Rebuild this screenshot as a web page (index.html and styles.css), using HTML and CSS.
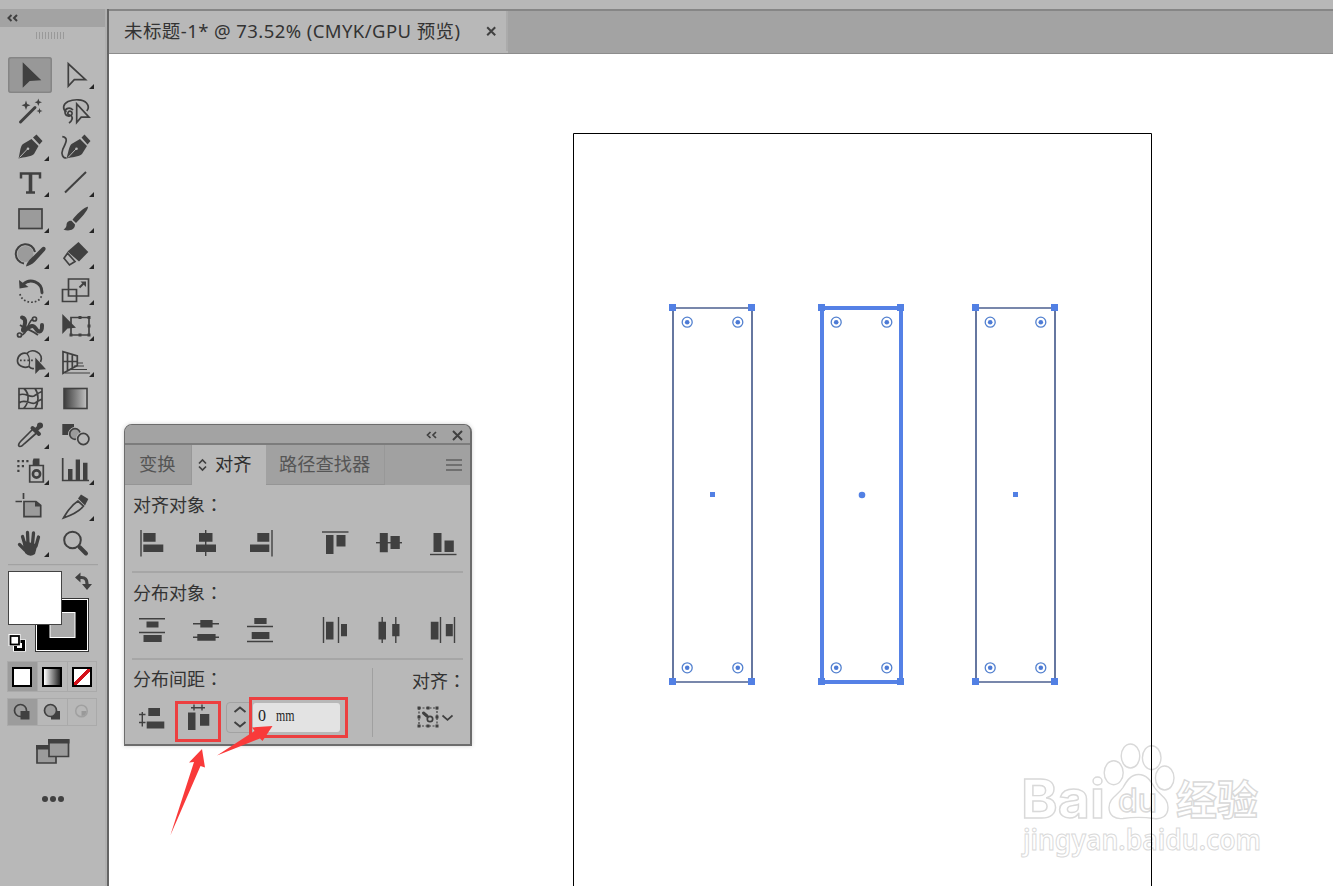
FILE: index.html
```html
<!DOCTYPE html>
<html lang="zh-CN">
<head>
<meta charset="utf-8">
<title>未标题-1*</title>
<link rel="stylesheet" href="styles.css">
</head>
<body>
<div class="app">
  <div class="topbar"></div>
  <aside class="toolbar">
    <div class="toolbar-head"><svg width="12" height="8" viewBox="0 0 12 8"><path class="ln2" d="M4.500 1 1.500 4l3 3M10 1 7 4l3 3"/></svg></div>
    <div class="grip"></div>
    <div class="tools">
      <div class="tool selected"><svg viewBox="-22 -18 44 36"><path class="f" d="M-7.300-12.700V12.700L-.300 6l11.600-.700z"/></svg></div>
      <div class="tool fly"><svg viewBox="-22 -18 44 36"><path class="ln" d="M-6.700-11.200V11L-.700 4.700H10.500z"/></svg></div>

      <div class="tool"><svg viewBox="-22 -18 44 36"><path class="ln3" d="M-9.500 11 5-3.500"/><path class="f" d="M-4-10.500-2.800-7 .5-5.700-2.800-4.500-4-1-5.200-4.500-8.500-5.700-5.200-7zM8.300-12.500l1 2.800 2.700 1-2.700 1-1 2.700-1-2.700-2.700-1 2.700-1zM9.500-3l.8 2.200 2.200.8-2.200.8L9.500 3 8.700.8 6.500 0l2.200-.8z"/></svg></div>
      <div class="tool"><svg viewBox="-22 -18 44 36"><path class="ln" d="M-8.500 1C-13-2-12-7-7-9.500-1-12 8-12 11.500-8c2.500 3 2 6 .3 8"/><path class="ln" d="M-2-1c-3-3-8-2-8 2 0 4.500 6 5.500 7 2 .5-3-3-4-4-1.500S-5 4-3.500 5c1.500 2 .5 5-2.500 7"/><path class="ln" d="M1.700-7V11.500L6.200 6.200H14z"/></svg></div>

      <div class="tool fly"><svg viewBox="-22 -18 44 36"><path class="f" d="M-11.500 11.500C-10 7-10-1-7-3L1.500-8 8.500-1 4 7C1 10-6 10-11.500 11.500zM3-9.500 6.500-12.500 12.500-6 9.500-2.500z"/><path class="cut" d="M-10.500 10.500-2.500 2"/><circle class="cutfill" cx="-2" cy="1.700" r="1.300"/></svg></div>
      <div class="tool"><svg viewBox="-22 -18 44 36"><path class="f" d="M-8.500 11.500C-7 7-6-1-3.500-3L5-8l7 7-5 8C4 10-3 10-8.500 11.500zM6.500-9.500 9.500-12.500 15.500-6 12.500-2.500z"/><path class="cut" d="M-7 10.500 1 2"/><circle class="cutfill" cx="1.500" cy="1.700" r="1.300"/><path class="ln" d="M-12.700-10.300c7 1 3 7 .5 12.500-2 5 0 9 3.700 8.800"/></svg></div>

      <div class="tool fly"><svg viewBox="-22 -18 44 36"><path class="ln3b" d="M.500-9.500V9"/><path class="ln2b" d="M-9-4.500V-9.500H10V-4.500M-4 9.500H5"/></svg></div>
      <div class="tool fly"><svg viewBox="-22 -18 44 36"><path class="ln2" d="M-10 9.500 11-11"/></svg></div>

      <div class="tool fly"><svg viewBox="-22 -18 44 36"><rect class="box" x="-11" y="-10" width="23" height="19.500"/></svg></div>
      <div class="tool fly"><svg viewBox="-22 -18 44 36"><path class="f" d="M13-12.300c-3-.6-12.500 8.500-15.500 13L1 4C5 0 13.500-9 13-12.300zM-3.500 1.800c-4-.3-5 2.700-5 4.500S-10 10-11.500 10.500C-7 12.500 0 11.500 0 5.500z"/></svg></div>

      <div class="tool fly"><svg viewBox="-22 -18 44 36"><circle class="soft" cx="-4.500" cy="-1" r="8"/><path class="ln2" d="M-6 8.500A9.700 9.700 0 1 1 5-3"/><path class="f" d="M-4 11.500C-3.500 8 0 4 3 1.500L12-7.500c2-2 5 .5 3 3L5 6.500C2 9.500-1 10.500-4 11.500z"/></svg></div>
      <div class="tool fly"><svg viewBox="-22 -18 44 36"><path class="f" d="M-7.500-3.500 3.500-13 13.300-3 4 6.500z"/><path class="ln" d="M-7.500-1.800-11 3.300-5.500 10 0 6.500z"/></svg></div>

      <div class="tool fly"><svg viewBox="-22 -18 44 36"><path class="ln3" d="M-7-6.500C0-13.500 12-9 12 1.500"/><path class="f" d="M-11-11-10.500-2.500-1.500-4z"/><path class="dot" d="M-10 3C-8 13 10 15 12 3"/></svg></div>
      <div class="tool fly"><svg viewBox="-22 -18 44 36"><path class="ln" d="M-6.500-12H13.500V5H-6.500zM-12.500-1.500H1.500V10.500h-14z"/><path class="ln2" d="M4.500-3.500 9-8"/><path class="f" d="M5.500-9.500H11V-4z"/></svg></div>

      <div class="tool fly"><svg viewBox="-22 -18 44 36"><path class="ln4" d="M-8-9.500c5 1 3 8 1 12-.5 4 5-3 9-3.500 4-.5 4 6 7.500 5.500C12.500 4 12 1 12-2"/><path class="ln" d="M-10 8C-2 9-3-7 4-8.500M-10-2C-5 2 2 3 8 8"/><circle class="hole" cx="-10.500" cy="8" r="2"/><circle class="hole" cx="4.500" cy="-8" r="2"/></svg></div>
      <div class="tool fly"><svg viewBox="-22 -18 44 36"><path class="ln" d="M-4-9.500H14V8H-4z"/><path class="f" d="M-12.700-13V7L-7.500 1.500 1 .700zM-5.500 6.500h3v3h-3zM3.500 6.500h3v3h-3zM12.500 6.500h3v3h-3zM12.500-11h3v3h-3zM3.500-11h3v3h-3zM12.500-2.500h3v3h-3z"/></svg></div>

      <div class="tool fly"><svg viewBox="-22 -18 44 36"><path class="ln" d="M4 5.500C1 6 0 5-1 3.500-7 6-13 2-12.500-3-12-8-7-11-3-9.500-1-12 3-13 7-11c4 2 5.500 6 3.500 10"/><path class="dot" d="M-10-2.700H3"/><path class="thin" d="M-3-9.500C0-6 0 0-1 3"/><path class="f" d="M5.300-5.500V11L9.500 6.700 16 6.300z"/></svg></div>
      <div class="tool fly"><svg viewBox="-22 -18 44 36"><path class="ln" d="M-12-11.300V10.300L2.300 2.500V-7zM-7.500-10V7.500M-2.700-8.500V5M-12-1.500H2.300"/><path class="thin" d="M2 0H8M-1 3H9M-5 6.500H12M-10 10H15"/></svg></div>

      <div class="tool"><svg viewBox="-22 -18 44 36"><path class="ln" d="M-11-10.500H12V9.500H-11zM-6-10.500C0-5-1 4-6.500 9.500M5-10.500C9-5 9 3 5 9.500M-11-4C-5-7 0-1 4-3 7-5 10-7 12-7.500M-11 4C-5-1 0 6 5 4 8 2 10 1 12 0"/></svg></div>
      <div class="tool"><svg viewBox="-22 -18 44 36"><defs><linearGradient id="g1"><stop offset="0" stop-color="#3c3c3c"/><stop offset="1" stop-color="#c2c2c2"/></linearGradient></defs><rect class="edge" x="-11" y="-10.500" width="23" height="20" fill="url(#g1)"/></svg></div>

      <div class="tool fly"><svg viewBox="-22 -18 44 36"><path class="ln" d="M2.500-5.500-9 6c-3 3-3 5.500-1 5.500s3-1.500 4.500-3L6.500-2"/><path class="ln4" d="M2.500-7 9-1M6-5l4.500-4.500"/><circle class="f" cx="10" cy="-9.500" r="3"/></svg></div>
      <div class="tool"><svg viewBox="-22 -18 44 36"><path class="f" d="M-12.700-11H-1V0H-12.700z"/><circle class="halo" cx="0" cy="-1" r="6.500"/><circle class="box" cx="0" cy="-1" r="5.300"/><circle class="halo" cx="8.300" cy="4" r="7"/><circle class="hole" cx="8.300" cy="4" r="5.600"/></svg></div>

      <div class="tool fly"><svg viewBox="-22 -18 44 36"><path class="f" d="M3.500-12.500H9.500V-6H2.700V-10zM-12.700-11h2.200v2.200h-2.200zM-8.200-11h2.200v2.200h-2.200zM-3.700-11h2.200v2.200h-2.200zM-12.700-6h2.200v2.200h-2.200zM-8.200-6h2.200v2.200h-2.200zM-12.700-1.300h2.200v2.200h-2.200z"/><path class="ln" d="M-.300-5.500H13.300V11H-.300z"/><circle class="ring" cx="6.500" cy="3" r="3.600"/></svg></div>
      <div class="tool fly"><svg viewBox="-22 -18 44 36"><path class="ln" d="M-12.300-13V9.500H14"/><path class="f" d="M-7-2h4.500V9H-7zM.700-11.500H5V9H.700zM8-8.200h4.500V9H8z"/></svg></div>

      <div class="tool"><svg viewBox="-22 -18 44 36"><path class="box" d="M-6-5.500H6L10.700-1.500V9.700H-6z"/><path class="f" d="M5-6V-.500H11z"/><path class="ln" d="M-14.500-5.500H-8M-6.500-14V-8"/></svg></div>
      <div class="tool fly"><svg viewBox="-22 -18 44 36"><path class="ln" d="M-11.500 11C-8 5-5-1 3-6L8.500-1C4 5-3 8-11.500 11z"/><path class="f" d="M3-8.500 6-12.500 13.300-8 10-1.500z"/></svg></div>

      <div class="tool fly"><svg viewBox="-22 -18 44 36"><path class="finger" d="M-5 2-7.500-6.500M-2 1-2.500-10.500M2.500 1 3.500-10M6 3 8.500-6M-5 7-10.500 1.500"/><path class="f" d="M-7 0-5 10Q0 15 5 11L7.500 1.500-6-2z"/></svg></div>
      <div class="tool"><svg viewBox="-22 -18 44 36"><circle class="ln2" cx="-2.500" cy="-3" r="8.300"/><path class="ln4" d="M4.500 4 11 10.500"/></svg></div>
    </div>
    <svg class="swatches" viewBox="8 564 90 91">
      <path class="rule" d="M8 564.500H98"/>
      <rect x="35.500" y="598.500" width="53" height="53" fill="#000" stroke="#333"/>
      <rect x="36.500" y="599.500" width="51" height="51" fill="#000" stroke="#fff"/>
      <rect x="50" y="612.500" width="25" height="25" fill="#aaa" stroke="#fff"/>
      <rect x="8.500" y="571.500" width="53" height="53" fill="#fff" stroke="#444"/>
      <path d="M79 577.500h2.500q5.500 0 5.500 6v1" fill="none" stroke="#444" stroke-width="3.200"/>
      <path class="f" d="M75 577.500 80.500 572.500V582.500zM82 584H92L87 590z"/>
      <rect x="15" y="641.500" width="9" height="8" fill="none" stroke="#fff" stroke-width="4"/>
      <rect x="15.500" y="641.500" width="8" height="8" fill="#fff" stroke="#000" stroke-width="3"/>
      <rect x="8.500" y="634" width="12" height="12" fill="#fff"/>
      <rect x="10.500" y="636" width="8.500" height="8.500" fill="#fff" stroke="#000" stroke-width="1.800"/>
    </svg>
    <div class="modes">
      <div class="on"><span class="chip"></span></div><div><span class="chip grad"></span></div><div><span class="chip none"></span></div>
    </div>
    <div class="modes draw">
      <div class="on"><svg viewBox="0 0 18 18"><circle class="ln" cx="7.500" cy="7.500" r="6"/><path class="f" d="M7.500 8h9v8.500h-9z"/></svg></div>
      <div><svg viewBox="0 0 18 18"><path class="f" d="M8 8h9v8.500H8z"/><circle class="box" cx="7.500" cy="7.500" r="6"/></svg></div>
      <div><svg viewBox="0 0 18 18"><circle cx="8.500" cy="8" r="5.800" fill="none" stroke="#a0a0a0" stroke-width="1.500"/><path d="M8.500 8h5a5 5 0 0 1-5 5z" fill="#999"/></svg></div>
    </div>
    <svg class="screens" width="34" height="26" viewBox="0 0 34 26"><path class="box" d="M1 7.500H20V24H1z"/><path class="f" d="M0 6H20v4.500H0z"/><path class="box" d="M13 1H32.500V17.500H13z"/><path class="f" d="M12 0H33.500V4.500H12z"/></svg>
    <svg class="more" width="24" height="8" viewBox="0 0 24 8"><circle class="f" cx="4" cy="4" r="3"/><circle class="f" cx="12" cy="4" r="3"/><circle class="f" cx="20" cy="4" r="3"/></svg>
  </aside>
  <main class="main">
    <div class="tabbar">
      <div class="doc-tab"><span class="doc-name">未标题-1* @ 73.52% (CMYK/GPU 预览)</span><svg width="11" height="11" viewBox="0 0 11 11"><path class="ln2" d="m1.200 1.200 8 8m0-8-8 8"/></svg></div>
    </div>
    <svg class="canvas" viewBox="109 54 1224 832">
      <defs>
        <g id="corners"><path d="M-3.500-3.500h7v7h-7zM75.500-3.500h7v7h-7zM-3.500 370.500h7v7h-7zM75.500 370.500h7v7h-7z" fill="#5280e4"/>
          <g fill="#fff" stroke="#5381cf" stroke-width="1.300"><circle cx="14.700" cy="14.700" r="5"/><circle cx="65.300" cy="14.700" r="5"/><circle cx="14.700" cy="360.300" r="5"/><circle cx="65.300" cy="360.300" r="5"/></g>
          <g fill="#4d7bd6"><circle cx="14.700" cy="14.700" r="2.300"/><circle cx="65.300" cy="14.700" r="2.300"/><circle cx="14.700" cy="360.300" r="2.300"/><circle cx="65.300" cy="360.300" r="2.300"/></g></g>
      </defs>
      <g class="mark">
        <text x="1021" y="818" font-size="53" textLength="84" lengthAdjust="spacingAndGlyphs">Bai</text>
        <path d="M1138.500 774.500c8 0 12 6 16 13 5 8 13.500 10 13.500 20 0 9-7 12-14 11-10-1.500-21-1.500-31 0-8 1-14-3-14-11 0-10 9-12 14-20 4-7 8-13 15.500-13z"/>
        <ellipse cx="1113.700" cy="772.700" rx="9.500" ry="12"/><ellipse cx="1130.500" cy="756" rx="9.300" ry="12"/><ellipse cx="1151.700" cy="757.700" rx="9.300" ry="12"/><ellipse cx="1164.700" cy="778" rx="9.300" ry="12"/>
        <text class="du" x="1118" y="811.500" font-size="32" textLength="39" lengthAdjust="spacingAndGlyphs">du</text>
        <text class="cn" x="1176" y="815" font-size="41">经验</text>
        <text class="url" x="1023" y="850" font-size="29" textLength="238" lengthAdjust="spacingAndGlyphs">jingyan.baidu.com</text>
      </g>
      <path d="M573.500 887V133.500H1151.500V887" fill="none" stroke="#000"/>
      <g transform="translate(672.500 307.500)"><path d="M.500.500h79v374H.500z" fill="none" stroke="#4c6090" stroke-width="1.700"/><use href="#corners"/><path d="M37.500 184.500h5v5h-5z" fill="#5280e4"/></g>
      <g transform="translate(821.500 307.500)"><path d="M.500.500h79v374H.500z" fill="none" stroke="#5581e6" stroke-width="4"/><use href="#corners"/><circle cx="40.500" cy="187.500" r="3.300" fill="#5280e4"/></g>
      <g transform="translate(975.500 307.500)"><path d="M.500.500h79v374H.500z" fill="none" stroke="#4c6090" stroke-width="1.700"/><use href="#corners"/><path d="M37.500 184.500h5v5h-5z" fill="#5280e4"/></g>
    </svg>
  </main>

  <section class="panel">
    <div class="panel-head">
      <svg width="12" height="8" viewBox="0 0 12 8"><path class="ln" d="M4.500 1 1.500 4l3 3M10 1 7 4l3 3"/></svg>
      <svg width="11" height="11" viewBox="0 0 11 11"><path class="ln2" d="m1 1 9 9m0-9-9 9"/></svg>
    </div>
    <div class="panel-tabs">
      <div class="ptab t1">变换</div>
      <div class="ptab t2"><svg width="9" height="14" viewBox="0 0 9 14"><path class="ln" d="M1 5.500 4.500 2 8 5.500M1 8.500 4.500 12 8 8.500"/></svg>对齐</div>
      <div class="ptab t3">路径查找器</div>
      <svg class="menu" width="16" height="12" viewBox="0 0 16 12"><path class="thin" d="M0 1H16M0 6H16M0 11H16"/></svg>
    </div>
    <div class="group">
      <div class="label">对齐对象<span lang="zh-TW">：</span></div>
      <div class="icons">
        <svg viewBox="-14 -14 28 28"><path class="bar" d="M-11-13V13.500"/><path class="f" d="M-8.700-10H3.600v8.700H-8.700zM-8.700 1.500h20V9h-20z"/></svg>
        <svg viewBox="-14 -14 28 28"><path class="bar" d="M-.300-13V13"/><path class="f" d="M-7-10H6.500v8.700H-7zM-10 1.500H10V9H-10z"/></svg>
        <svg viewBox="-14 -14 28 28"><path class="bar" d="M12-13V13.500"/><path class="f" d="M-2.700-10h12v8.700h-12zM-10 1.500H9.300V9H-10z"/></svg>
        <svg viewBox="-14 -14 28 28"><path class="bar" d="M-13-11H13.500"/><path class="f" d="M-9-8h7.500V11H-9zM1.500-8h9V3.500h-9z"/></svg>
        <svg viewBox="-14 -14 28 28"><path class="bar" d="M-13-.300H13"/><path class="f" d="M-9.200-10h8V9.300h-8zM1.500-7h9.300V6H1.500z"/></svg>
        <svg viewBox="-14 -14 28 28"><path class="bar" d="M-13 11.500H13.500"/><path class="f" d="M-9.500-10h8V9h-8zM1.500-2.500h9.300V9H1.500z"/></svg>
      </div>
    </div>
    <div class="group">
      <div class="label">分布对象<span lang="zh-TW">：</span></div>
      <div class="icons">
        <svg viewBox="-14 -14 28 28"><path class="bar" d="M-13-11.300H13M-13 2.500H13"/><path class="f" d="M-5.500-8.500h12v6h-12zM-8.500 5H9.700V12H-8.500z"/></svg>
        <svg viewBox="-14 -14 28 28"><path class="bar" d="M-13-6.300H13M-13 7.300H13"/><path class="f" d="M-5.700-10H6.600v7.500H-5.700zM-8.700 4H9.600v6.700H-8.700z"/></svg>
        <svg viewBox="-14 -14 28 28"><path class="bar" d="M-13-3.500H13M-13 11.500H13"/><path class="f" d="M-5.700-12H6.600v6H-5.700zM-8.300 2H9.400V9H-8.300z"/></svg>
        <svg viewBox="-14 -14 28 28"><path class="bar" d="M-11.500-13V13M3.500-13V13"/><path class="f" d="M-9-8.300h7.500V9.400H-9zM6-6h6V6.200H6z"/></svg>
        <svg viewBox="-14 -14 28 28"><path class="bar" d="M-6.800-13V13M6.800-13V13"/><path class="f" d="M-10.500-8.300h7.500V9.400h-7.500zM3.200-6h7.300V6.200H3.200z"/></svg>
        <svg viewBox="-14 -14 28 28"><path class="bar" d="M-2.500-13V13M11.500-13V13"/><path class="f" d="M-12.200-8.300h7.700V9.400h-7.700zM2.800-6h7V6.200h-7z"/></svg>
      </div>
    </div>
    <div class="group last">
      <div class="spacing">
        <div class="label">分布间距<span lang="zh-TW">：</span></div>
        <div class="spacing-row">
          <svg width="28" height="28" viewBox="-14 -14 28 28"><path class="bar" d="M-9.700-6V8.500M-13-3.500H-6.500M-13 4.500H-6.500"/><path class="f" d="M-3.700-10H8v8H-3.700zM-5.300 3.500H12.300v7H-5.300z"/></svg>
          <div class="hot"><svg width="28" height="28" viewBox="-14 -14 28 28"><path class="bar" d="M-7-10.300H7M-4-13.500V-7.500M4-13.500V-7.500"/><path class="f" d="M-10-5.500h7.500V12H-10zM2-4h9.300V7.700H2z"/></svg></div>
          <div class="stepper"><svg width="14" height="22" viewBox="0 0 14 22"><path class="ln2" d="M1.500 6 7 1.500 12.500 6M1.500 16 7 20.500 12.500 16"/></svg></div>
          <div class="field-mark"><div class="field"><svg width="60" height="22" viewBox="0 0 60 22"><text x="0" y="14.500" font-size="17" textLength="8" lengthAdjust="spacingAndGlyphs">0</text><text x="18" y="14.500" font-size="17" textLength="18.500" lengthAdjust="spacingAndGlyphs">mm</text></svg></div></div>
        </div>
      </div>
      <div class="align-to">
        <div class="label">对齐<span lang="zh-TW">：</span></div>
        <svg width="36" height="22" viewBox="0 0 36 22"><path class="thin" stroke-dasharray="2 1.500" d="M2 2H20V20H2z"/><path class="f" d="M.500.500h3v3h-3zM9.500.500h3v3h-3zM18.500.500h3v3h-3zM.500 9.500h3v3h-3zM18.500 9.500h3v3h-3zM.500 18.500h3v3h-3zM9.500 18.500h3v3h-3zM18.500 18.500h3v3h-3z"/><path class="ln3" d="M6.500 7 10 10"/><circle class="ln" cx="13" cy="13" r="2.700"/><path class="ln" d="m25.500 9.500 5 4.300 5-4.300"/></svg>
      </div>
    </div>
  </section>
  <svg class="arrows" width="110" height="115" viewBox="167 722 110 115"><path d="M202 749 189 762.500 194 762 170.300 835.500 200.500 766 205 767.500zM272.500 726 252 727.500 254.500 731 217 755.500 260 738.500 262.500 741z"/></svg>
</div>
</body>
</html>
```
FILE: styles.css
```css
* { box-sizing: border-box; }
body { margin: 0; width: 1333px; height: 886px; overflow: hidden; background: #fff; font-family: "Noto Sans", "Noto Sans CJK SC", sans-serif; }
svg { display: block; flex: none; }

/* shared icon strokes and fills */
.f { fill: #404040; }
.ln, .ln2, .ln2b, .ln3, .ln3b, .ln4, .thin, .bar, .dot, .finger, .ring { fill: none; stroke: #404040; stroke-width: 1.7; }
.ln2 { stroke-width: 2; }
.ln2b { stroke-width: 2.5; }
.ln3 { stroke-width: 3; stroke-linecap: round; }
.ln3b { stroke-width: 3.6; }
.ln4 { stroke-width: 4; stroke-linecap: round; }
.thin { stroke-width: 1.2; }
.bar { stroke-width: 1.4; }
.dot { stroke-width: 1.7; stroke-dasharray: 1.7 2; }
.finger { stroke-width: 3.3; stroke-linecap: round; }
.ring { stroke-width: 2.6; }
.box { fill: #9b9b9b; stroke: #404040; stroke-width: 1.7; }
.soft { fill: #9b9b9b; }
.hole { fill: #b8b8b8; stroke: #404040; stroke-width: 1.7; }
.halo { fill: #b8b8b8; stroke: #b8b8b8; }
.edge { stroke: #404040; stroke-width: 1.6; }
.cut { stroke: #b8b8b8; stroke-width: 1; fill: none; }
.cutfill { fill: #b8b8b8; }
.rule { stroke: #a2a2a2; stroke-width: 1.5; }

.app { position: relative; display: grid; grid-template: 9px 877px / 109px 1224px; }
.topbar { grid-column: 1 / 3; background: #b8b8b8; }

.toolbar { background: #b8b8b8; border-right: 2px solid #646464; box-shadow: inset -2px 0 #b0b0b0; }
.toolbar-head { height: 18px; margin-right: 2px; background: #a3a3a3; padding: 5px 7px; }
.grip { width: 30px; height: 7px; margin: 5px 0 0 36px; background: repeating-linear-gradient(90deg, #999 0 1px, transparent 1px 3px); }
.tools { display: grid; grid-template-columns: 44px 44px; grid-auto-rows: 36px; column-gap: 1px; margin: 18px 0 0 8px; }
.tool { position: relative; }
.tool svg { width: 44px; height: 36px; }
.tool.selected { background: #989898; box-shadow: inset 0 0 0 1.5px #858585; border-radius: 3px; }
.fly::after { content: ""; position: absolute; left: 36px; top: 27px; width: 5px; height: 5px; background: #252525; clip-path: polygon(100% 0, 100% 100%, 0 100%); }
.swatches { width: 90px; height: 91px; margin: 3px 0 0 8px; }
.modes { display: grid; grid-template-columns: repeat(3, 1fr); width: 90px; height: 31px; margin: 6px 0 0 7px; border: 1px solid #aaa; }
.modes > div { display: flex; align-items: center; justify-content: center; }
.modes > div + div { border-left: 1px solid #aaa; }
.modes .on { background: #9c9c9c; padding-right: 1px; }
.chip { width: 20px; height: 20px; border: 2px solid #000; background: #fff; }
.chip.grad { background: linear-gradient(90deg, #fff, #222); }
.chip.none { background: linear-gradient(-45deg, #fff 41%, #d4101a 42% 58%, #fff 59%); }
.modes.draw { height: 28px; }
.draw svg { width: 18px; height: 18px; }
.screens { margin: 13px 0 0 36px; }
.more { margin: 30px 0 0 41px; }

.tabbar { height: 45px; background: #a3a3a3; border-top: 2px solid #868686; border-bottom: 1px solid #8d8d8d; }
.doc-tab { display: flex; align-items: center; justify-content: space-between; width: 399px; height: 40px; padding: 0 9px 0 15px; background: #b8b8b8; box-shadow: 0 2px #b8b8b8; border-right: 2px solid #ababab; color: #333; }
.doc-name { font-size: 18.5px; white-space: nowrap; letter-spacing: .42px; margin-top: -2px; }
.canvas { width: 1224px; height: 832px; }

/* outlined watermark */
.mark { fill: #fff; stroke: #d9d9d9; stroke-width: 1.4; font-family: Inter, "Liberation Sans", sans-serif; font-weight: 700; }
.mark .cn { font-family: "Noto Sans CJK SC", sans-serif; }
.mark .du { font-weight: 500; }
.mark .url { font-family: "Noto Sans", sans-serif; font-weight: 600; stroke-width: 1; }

/* floating align panel */
.panel { position: absolute; left: 124px; top: 424px; width: 348px; height: 322px; background: #b8b8b8; border: 2px solid #6c6c6c; border-top-width: 1px; border-left-width: 1px; border-radius: 8px 8px 0 0; overflow: hidden; box-shadow: 0 0 4px rgba(0,0,0,.18); }
.panel-head { display: flex; align-items: center; justify-content: flex-end; gap: 14px; height: 20px; padding: 2px 7px 0 0; background: #a3a3a3; border-bottom: 2px solid #7c7c7c; }
.panel-tabs { display: flex; align-items: center; height: 40px; padding-right: 8px; background: #a1a1a1; }
.ptab { height: 40px; line-height: 38px; font-size: 18.3px; color: #555; border-right: 1px solid #989898; border-bottom: 1px solid #959595; white-space: nowrap; }
.t1 { width: 67px; padding-left: 14px; }
.t2 { display: flex; align-items: center; gap: 8px; width: 74px; padding-left: 6px; background: #b8b8b8; border-color: #b8b8b8; color: #2e2e2e; line-height: 36px; padding-bottom: 2px; }
.t2 svg { margin-top: 3px; }
.t3 { width: 119px; padding-left: 13px; }
.menu { margin-left: auto; }
.group { height: 88px; margin: 0 7px; padding-top: 7px; border-bottom: 2px solid #a6a6a6; }
.label { margin-left: 1px; font: 18px/24px "Noto Sans CJK SC", sans-serif; color: #333; white-space: nowrap; }
.label span { font-family: "Noto Sans CJK TC", sans-serif; }
.icons { display: flex; gap: 26px; margin: 13px 0 0 6px; }
.icons svg { width: 28px; height: 28px; }
.icons svg:nth-child(4) { margin-left: 21px; }
.group + .group { height: 87px; padding-top: 7px; }
.group + .group .icons { margin-top: 12px; }
.group.last { display: grid; grid-template-columns: 241px 1fr; border: 0; padding-top: 7px; }
.spacing { height: 69px; margin-top: 1px; border-right: 1px solid #a0a0a0; }
.spacing .label { margin-top: -2px; }
.spacing-row { display: flex; align-items: center; height: 41px; margin: 10px 0 0 6px; }
.spacing-row > svg { margin-top: -5px; }
.hot { display: flex; align-items: center; justify-content: center; width: 46px; height: 41px; margin: 1px 0 0 9px; border: 3px solid #ec3f40; }
.hot svg { margin-top: -6px; }
.stepper { display: flex; align-items: center; width: 24px; height: 31px; margin: -7px 0 0 5px; padding-left: 6px; border: 1px solid #a2a2a2; border-radius: 4px 0 0 4px; }
.field-mark { width: 99px; height: 41px; margin: -6px 0 0 -1px; border: 3px solid #ec3f40; padding: 3px 5px 3px 1px; }
.field { height: 29px; padding: 3px 0 0 5px; background: #e3e3e3; border-radius: 3px; }
.field text { font-family: "Liberation Serif", serif; fill: #222; }
.align-to { padding: 1px 0 0 38px; }
.align-to svg { margin: 14px 0 0 6px; }
.arrows { position: absolute; left: 167px; top: 722px; fill: #f93a3a; }
```
